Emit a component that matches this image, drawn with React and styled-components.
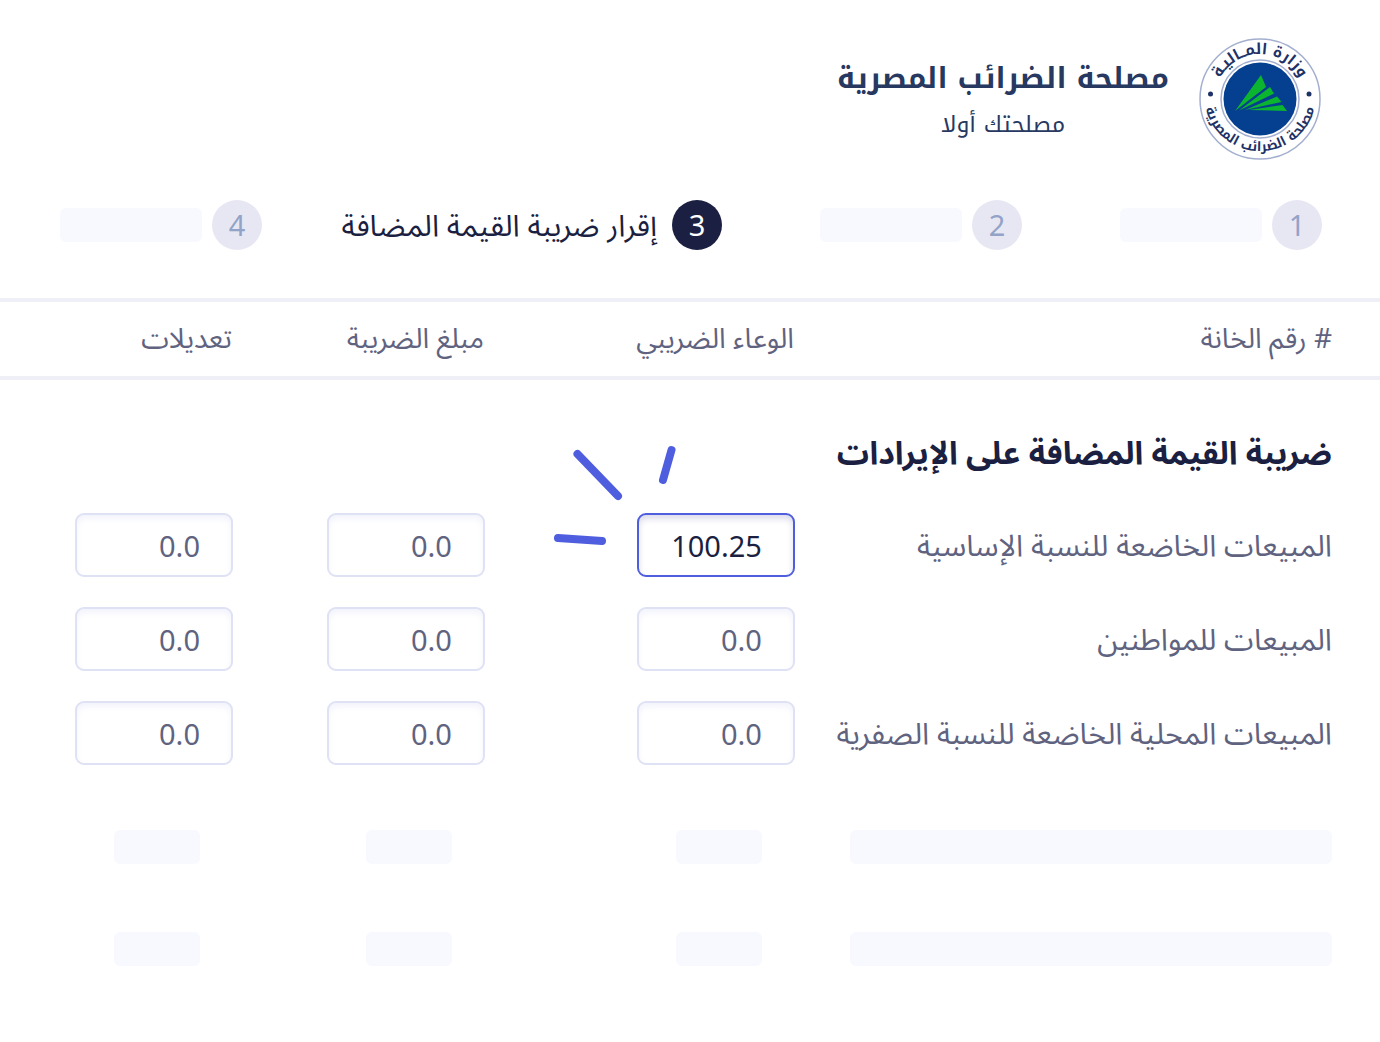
import React from 'react';
import styled, { createGlobalStyle } from 'styled-components';

const colors = {
  ink: '#1b1f41',
  muted: '#5f6380',
  brand: '#273961',
  accent: '#4f5edf',
  line: '#efeff7',
  border: '#dfe1f4',
  ghost: '#f8f9fe',
};

const GlobalStyle = createGlobalStyle`
  *, *::before, *::after {
    box-sizing: border-box;
  }

  body {
    margin: 0;
    background: #fff;
    color: ${colors.ink};
    font-family: "Noto Sans Arabic", "Noto Sans", sans-serif;
  }
`;

const Page = styled.main`
  min-height: 100vh;
  border-radius: 10px;
  background: #fff;
`;

const Header = styled.header`
  display: flex;
  align-items: center;
  gap: 30px;
  padding: 38px 59px 0;
`;

const Brand = styled.div`
  padding-top: 4px;
  text-align: center;
  color: ${colors.brand};
  font-family: "Noto Kufi Arabic", "Noto Sans Arabic", sans-serif;
`;

const BrandName = styled.h1`
  margin: 0;
  font-size: 29px;
  line-height: 48px;
  font-weight: 700;
`;

const BrandTagline = styled.p`
  margin: 0;
  font-size: 23px;
  line-height: 44px;
`;

const Steps = styled.ol`
  display: grid;
  grid-template-columns: 300fr 300fr 460fr 202fr;
  margin: 0;
  padding: 40px 58px 48px 60px;
  list-style: none;
`;

const Step = styled.li`
  display: flex;
  align-items: center;
  gap: 10px;
  height: 50px;
`;

const StepNumber = styled.span`
  flex: none;
  width: 50px;
  height: 50px;
  border-radius: 50%;
  background: ${({ $active }) => ($active ? colors.ink : '#e7e7f3')};
  color: ${({ $active }) => ($active ? '#fff' : '#93a3c8')};
  font-family: "Noto Sans", sans-serif;
  font-size: 29px;
  line-height: 50px;
  text-align: center;
`;

const StepTitle = styled.span`
  padding: 4px 5px 0 0;
  font-size: 30px;
  line-height: 50px;
  white-space: nowrap;
`;

const Ghost = styled.span`
  display: block;
  width: ${({ $width }) => $width};
  height: 34px;
  border-radius: 6px;
  background: ${colors.ghost};
`;

const Table = styled.table`
  width: 100%;
  table-layout: fixed;
  border-collapse: separate;
  border-spacing: 0;
`;

const HeadCell = styled.th`
  width: ${({ $width }) => $width};
  height: 82px;
  padding: 2px ${({ $first }) => ($first ? '48px' : '1px')} 0 0;
  border: solid ${colors.line};
  border-width: 4px 0;
  color: ${colors.muted};
  font-size: 28px;
  line-height: 40px;
  font-weight: 400;
  text-align: right;
`;

const SectionTitle = styled.th`
  height: 118px;
  padding: 30px 48px 0 0;
  font-size: 32px;
  line-height: 48px;
  font-weight: 700;
  text-align: right;
`;

const LabelCell = styled.th`
  height: 94px;
  padding: 4px 48px 0 36px;
  color: ${colors.muted};
  font-size: 30px;
  line-height: 44px;
  font-weight: 400;
  text-align: right;
  white-space: nowrap;
`;

const Cell = styled.td`
  padding: 0;
`;

const Field = styled.div`
  position: relative;
  width: 158px;
`;

const AmountInput = styled.input`
  display: block;
  width: 100%;
  height: 64px;
  padding: 0 31px;
  border: 2px solid ${({ $active }) => ($active ? colors.accent : colors.border)};
  border-radius: 9px;
  background: #fff;
  box-shadow: inset 0 4px 6px ${({ $active }) => ($active ? '#dcdcec' : '#f3f4fc')};
  color: ${({ $active }) => ($active ? colors.ink : colors.muted)};
  font-family: "Noto Sans", sans-serif;
  font-size: 29px;
  text-align: right;
  outline: none;
`;

const Rays = styled.svg`
  position: absolute;
  top: -73px;
  left: -87px;
  width: 130px;
  height: 110px;
  pointer-events: none;
`;

const GhostRows = styled.tbody`
  &::before {
    content: '';
    display: table-row;
    height: 16px;
  }
`;

const GhostCell = styled.td`
  height: 102px;
  padding: ${({ $first }) => ($first ? '0 48px 0 55px' : '0 33px 0 0')};
`;

const LogoMark = styled.svg`
  flex: none;
  width: 122px;
  height: 122px;
  overflow: visible;
`;

const Logo = () => (
  <LogoMark viewBox="0 0 122 122" role="img" aria-label="وزارة المالية - مصلحة الضرائب المصرية">
    <defs>
      <path id="logo-top" d="M 16 61 A 45 45 0 0 1 106 61" />
      <path id="logo-bottom" d="M 5 57 A 56 56 0 0 0 117 57" />
    </defs>
    <circle cx="61" cy="61" r="60" fill="#fff" stroke="#a3afcf" strokeWidth="1.500" />
    <circle cx="61" cy="61" r="39" fill="#fff" stroke="#a3afcf" strokeWidth="1.500" />
    <circle cx="61" cy="61" r="36.500" fill="#053f8f" />
    <g fill="#0bb52f">
      <path d="M62 37 L67 49 L36 73 Z" />
      <path d="M71 49 L75 55.500 L40 72.500 Z" />
      <path d="M78 58.500 L82.500 64 L46 72 Z" />
      <path d="M83.500 67 L88 73 L50 72 Z" />
    </g>
    <circle cx="11.500" cy="56" r="2.500" fill="#1d3266" />
    <circle cx="110" cy="56" r="2.500" fill="#1d3266" />
    <g
      fill="#1d3266"
      fontFamily="'Noto Kufi Arabic', 'Noto Sans Arabic', sans-serif"
      fontWeight="700"
      textAnchor="middle"
      direction="rtl"
    >
      <text fontSize="15">
        <textPath href="#logo-top" startOffset="50%">وزارة المــاليـة</textPath>
      </text>
      <text fontSize="13">
        <textPath href="#logo-bottom" startOffset="50%">مصلحة الضرائب المصرية</textPath>
      </text>
    </g>
  </LogoMark>
);

const columns = [
  { title: '# رقم الخانة', width: '42.400%' },
  { title: 'الوعاء الضريبي', width: '22.460%' },
  { title: 'مبلغ الضريبة', width: '18.260%' },
  { title: 'تعديلات', width: '16.880%' },
];

const steps = [
  { number: 1 },
  { number: 2 },
  { number: 3, title: 'إقرار ضريبة القيمة المضافة' },
  { number: 4 },
];

const rows = [
  { label: 'المبيعات الخاضعة للنسبة الإساسية', values: ['100.25', '0.0', '0.0'], active: 0 },
  { label: 'المبيعات للمواطنين', values: ['0.0', '0.0', '0.0'] },
  { label: 'المبيعات المحلية الخاضعة للنسبة الصفرية', values: ['0.0', '0.0', '0.0'] },
];

const App = () => (
  <React.Fragment>
    <GlobalStyle />
    <Page dir="rtl" lang="ar">
      <Header>
        <Logo />
        <Brand>
          <BrandName>مصلحة الضرائب المصرية</BrandName>
          <BrandTagline>مصلحتك أولا</BrandTagline>
        </Brand>
      </Header>
      <Steps>
        {steps.map(({ number, title }) => (
          <Step key={number} aria-current={title ? 'step' : undefined}>
            <StepNumber $active={Boolean(title)}>{number}</StepNumber>
            {title ? <StepTitle>{title}</StepTitle> : <Ghost $width="142px" />}
          </Step>
        ))}
      </Steps>
      <Table>
        <thead>
          <tr>
            {columns.map(({ title, width }, i) => (
              <HeadCell key={title} scope="col" $width={width} $first={i === 0}>
                {title}
              </HeadCell>
            ))}
          </tr>
        </thead>
        <tbody>
          <tr>
            <SectionTitle colSpan={4} scope="rowgroup">
              ضريبة القيمة المضافة على الإيرادات
            </SectionTitle>
          </tr>
          {rows.map(({ label, values, active }) => (
            <tr key={label}>
              <LabelCell scope="row">{label}</LabelCell>
              {values.map((value, i) => (
                <Cell key={columns[i + 1].title}>
                  <Field>
                    <AmountInput
                      type="text"
                      dir="ltr"
                      inputMode="decimal"
                      aria-label={`${label} - ${columns[i + 1].title}`}
                      defaultValue={value}
                      $active={active === i}
                    />
                    {active === i &&
                      <Rays viewBox="0 0 130 110" stroke={colors.accent} strokeWidth="8" strokeLinecap="round" aria-hidden="true">
                        <path d="M27.500 14 L68 56 M121.500 10 L113 40 M8 98 L52 101" />
                      </Rays>
                    }
                  </Field>
                </Cell>
              ))}
            </tr>
          ))}
        </tbody>
        <GhostRows>
          {[1, 2].map(row => (
            <tr key={row}>
              <GhostCell $first><Ghost $width="100%" /></GhostCell>
              <GhostCell><Ghost $width="86px" /></GhostCell>
              <GhostCell><Ghost $width="86px" /></GhostCell>
              <GhostCell><Ghost $width="86px" /></GhostCell>
            </tr>
          ))}
        </GhostRows>
      </Table>
    </Page>
  </React.Fragment>
);

export default App;
